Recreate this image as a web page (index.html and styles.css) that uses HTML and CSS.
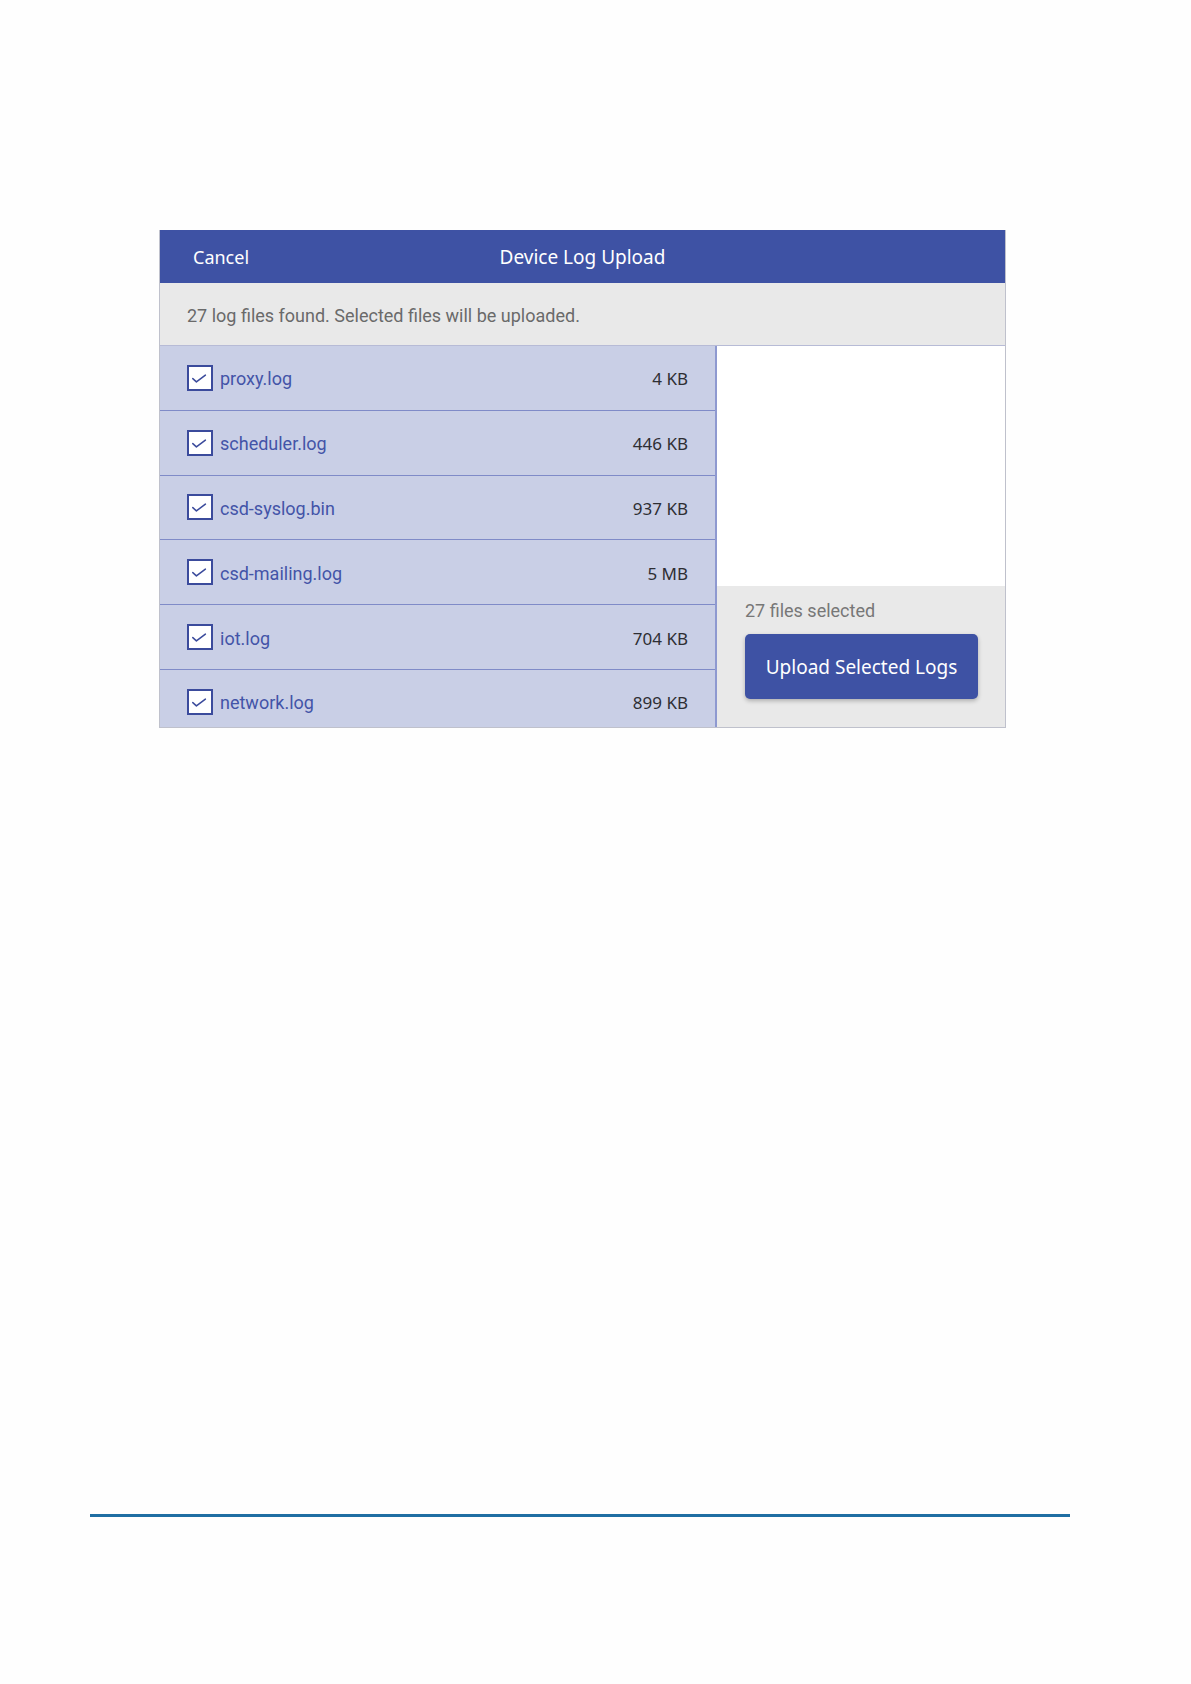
FILE: index.html
```html
<!DOCTYPE html>
<html>
<head>
<meta charset="utf-8">
<link rel="stylesheet" href="styles.css">
</head>
<body>
<div class="page">
  <div class="dialog">
    <div class="header">
      <span class="cancel">Cancel</span>
      <span class="title">Device Log Upload</span>
    </div>
    <div class="info">27 log files found. Selected files will be uploaded.</div>
    <div class="body">
      <div class="list">
        <div class="row"><span class="check"><svg viewBox="0 0 22 22"><path d="M3.8 11.6 L7.4 14.9 L16.4 8.1" fill="none" stroke="#3b4b9c" stroke-width="1.5" stroke-linecap="round" stroke-linejoin="round"/></svg></span><span class="name">proxy.log</span><span class="size">4 KB</span></div>
        <div class="row"><span class="check"><svg viewBox="0 0 22 22"><path d="M3.8 11.6 L7.4 14.9 L16.4 8.1" fill="none" stroke="#3b4b9c" stroke-width="1.5" stroke-linecap="round" stroke-linejoin="round"/></svg></span><span class="name">scheduler.log</span><span class="size">446 KB</span></div>
        <div class="row"><span class="check"><svg viewBox="0 0 22 22"><path d="M3.8 11.6 L7.4 14.9 L16.4 8.1" fill="none" stroke="#3b4b9c" stroke-width="1.5" stroke-linecap="round" stroke-linejoin="round"/></svg></span><span class="name">csd-syslog.bin</span><span class="size">937 KB</span></div>
        <div class="row"><span class="check"><svg viewBox="0 0 22 22"><path d="M3.8 11.6 L7.4 14.9 L16.4 8.1" fill="none" stroke="#3b4b9c" stroke-width="1.5" stroke-linecap="round" stroke-linejoin="round"/></svg></span><span class="name">csd-mailing.log</span><span class="size">5 MB</span></div>
        <div class="row"><span class="check"><svg viewBox="0 0 22 22"><path d="M3.8 11.6 L7.4 14.9 L16.4 8.1" fill="none" stroke="#3b4b9c" stroke-width="1.5" stroke-linecap="round" stroke-linejoin="round"/></svg></span><span class="name">iot.log</span><span class="size">704 KB</span></div>
        <div class="row"><span class="check"><svg viewBox="0 0 22 22"><path d="M3.8 11.6 L7.4 14.9 L16.4 8.1" fill="none" stroke="#3b4b9c" stroke-width="1.5" stroke-linecap="round" stroke-linejoin="round"/></svg></span><span class="name">network.log</span><span class="size">899 KB</span></div>
      </div>
      <div class="side">
        <div class="side-blank"></div>
        <div class="side-foot">
          <div class="count">27 files selected</div>
          <button class="upload">Upload Selected Logs</button>
        </div>
      </div>
    </div>
  </div>
  <div class="rule"></div>
</div>
</body>
</html>
```

FILE: styles.css
```css
* { box-sizing: border-box; }
html, body { margin: 0; padding: 0; background: #fefefe; }
body { font-family: Roboto, "Liberation Sans", sans-serif; }
.page { width: 1191px; height: 1684px; padding-top: 230px; position: relative; }
.dialog {
  margin-left: 159px;
  width: 847px;
  border: 1px solid #bfc1cc;
  border-top: none;
}
.header {
  height: 53px;
  background: #3e52a4;
  display: flex;
  align-items: center;
  position: relative;
  color: #fff;
  font-family: "Noto Sans", sans-serif;
  font-size: 18px;
}
.cancel { padding-left: 33px; }
.title {
  position: absolute;
  left: 0; right: 0;
  text-align: center;
  pointer-events: none;
  font-size: 19px;
}
.info {
  height: 63px;
  background: #e9e9e9;
  border-bottom: 1px solid #b7bbd6;
  display: flex;
  align-items: center;
  padding: 3px 0 0 27px;
  color: #6a6a6a;
  font-size: 18px;
}
.body { display: flex; height: 381px; }
.list {
  width: 558px;
  background: #c9cfe6;
  border-right: 2px solid #8e99d0;
  overflow: hidden;
}
.row {
  height: 64.8px;
  border-bottom: 1px solid #7f8bc8;
  display: flex;
  align-items: center;
  padding: 2px 27px 0 27px;
}
.check {
  width: 26px; height: 26px;
  border: 2px solid #3b4b9c;
  background: #fff;
  display: flex;
  flex: none;
  margin-top: -2px;
}
.check svg { width: 22px; height: 22px; display: block; }
.name { margin-left: 7px; color: #4354a8; font-size: 18px; flex: 1; }
.size { color: #2e2e33; font-family: "Noto Sans", sans-serif; font-size: 17px; }
.side { flex: 1; display: flex; flex-direction: column; }
.side-blank { flex: 1; background: #fff; }
.side-foot {
  height: 141px;
  background: #e9e9e9;
  padding: 14px 27px 28px 28px;
}
.count { color: #777; font-size: 18px; line-height: 22px; }
.upload {
  display: block;
  margin-top: 12px;
  width: 233px; height: 65px;
  border: none;
  border-radius: 5px;
  background: #3e52a4;
  color: #fff;
  font-family: "Noto Sans", sans-serif;
  font-size: 19px;
  box-shadow: 0 2px 4px rgba(0,0,0,0.25);
  padding: 0;
}
.rule {
  position: absolute;
  left: 90px; top: 1514px;
  width: 980px; height: 3px;
  background: #1f6ea3;
}
```
